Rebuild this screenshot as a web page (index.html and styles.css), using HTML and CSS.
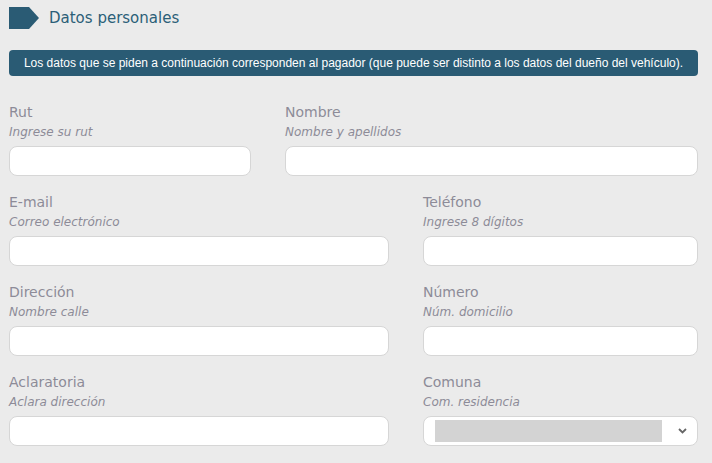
FILE: index.html
```html
<!DOCTYPE html>
<html lang="es">
<head>
<meta charset="utf-8">
<link rel="stylesheet" href="styles.css">
</head>
<body>
<div class="page">
  <div class="header">
    <svg class="arrow" width="30" height="22" viewBox="0 0 30 22"><polygon points="0,0 20,0 30,11 20,22 0,22" fill="#2a5b74"/></svg>
    <h1 class="title">Datos personales</h1>
  </div>
  <div class="banner">Los datos que se piden a continuación corresponden al pagador (que puede ser distinto a los datos del dueño del vehículo).</div>
  <div class="form">
    <div class="row row-a">
      <div class="field">
        <div class="label">Rut</div>
        <div class="hint">Ingrese su rut</div>
        <div class="input"></div>
      </div>
      <div class="field">
        <div class="label">Nombre</div>
        <div class="hint">Nombre y apellidos</div>
        <div class="input"></div>
      </div>
    </div>
    <div class="row row-b">
      <div class="field">
        <div class="label">E-mail</div>
        <div class="hint">Correo electrónico</div>
        <div class="input"></div>
      </div>
      <div class="field">
        <div class="label">Teléfono</div>
        <div class="hint">Ingrese 8 dígitos</div>
        <div class="input"></div>
      </div>
    </div>
    <div class="row row-b">
      <div class="field">
        <div class="label">Dirección</div>
        <div class="hint">Nombre calle</div>
        <div class="input"></div>
      </div>
      <div class="field">
        <div class="label">Número</div>
        <div class="hint">Núm. domicilio</div>
        <div class="input"></div>
      </div>
    </div>
    <div class="row row-b">
      <div class="field">
        <div class="label">Aclaratoria</div>
        <div class="hint">Aclara dirección</div>
        <div class="input"></div>
      </div>
      <div class="field">
        <div class="label">Comuna</div>
        <div class="hint">Com. residencia</div>
        <div class="input select">
          <span class="select-value"></span>
          <svg class="chevron" width="9" height="6" viewBox="0 0 9 6"><path d="M1 1 L4.5 4.5 L8 1" fill="none" stroke="#666" stroke-width="1.8"/></svg>
        </div>
      </div>
    </div>
  </div>
</div>
</body>
</html>
```
FILE: styles.css
```css
html, body {
  margin: 0;
  padding: 0;
  background: #ebebeb;
}
.page {
  width: 712px;
  height: 463px;
  box-sizing: border-box;
  padding: 7px 14px 0 9px;
  font-family: "DejaVu Sans", Verdana, sans-serif;
  overflow: hidden;
}
.header {
  display: flex;
  align-items: center;
  gap: 10px;
  height: 22px;
}
.arrow {
  display: block;
  flex: none;
}
.title {
  margin: 0;
  font-weight: normal;
  font-size: 15px;
  color: #2b5f78;
  line-height: 22px;
}
.banner {
  margin-top: 21px;
  height: 26px;
  box-sizing: border-box;
  background: #2a5b74;
  border-radius: 4px;
  color: #fff;
  font-family: "Liberation Sans", Arial, sans-serif;
  font-size: 12px;
  line-height: 26px;
  text-align: center;
  white-space: nowrap;
}
.form {
  margin-top: 25px;
  display: flex;
  flex-direction: column;
  gap: 15px;
}
.row {
  display: grid;
  column-gap: 34px;
}
.row-a {
  grid-template-columns: 242px 1fr;
}
.row-b {
  grid-template-columns: 380px 1fr;
}
.field {
  display: flex;
  flex-direction: column;
}
.label {
  font-size: 14px;
  line-height: 22px;
  color: #8d8b98;
}
.hint {
  font-size: 12px;
  font-style: italic;
  line-height: 18px;
  color: #8d8b98;
}
.input {
  margin-top: 5px;
  height: 30px;
  box-sizing: border-box;
  background: #fff;
  border: 1px solid #d6d6d6;
  border-radius: 8px;
}
.select {
  display: flex;
  align-items: center;
  padding: 0 10px 0 11px;
}
.select-value {
  width: 227px;
  height: 22px;
  background: #d3d3d3;
}
.chevron {
  margin-left: auto;
  display: block;
}
```
